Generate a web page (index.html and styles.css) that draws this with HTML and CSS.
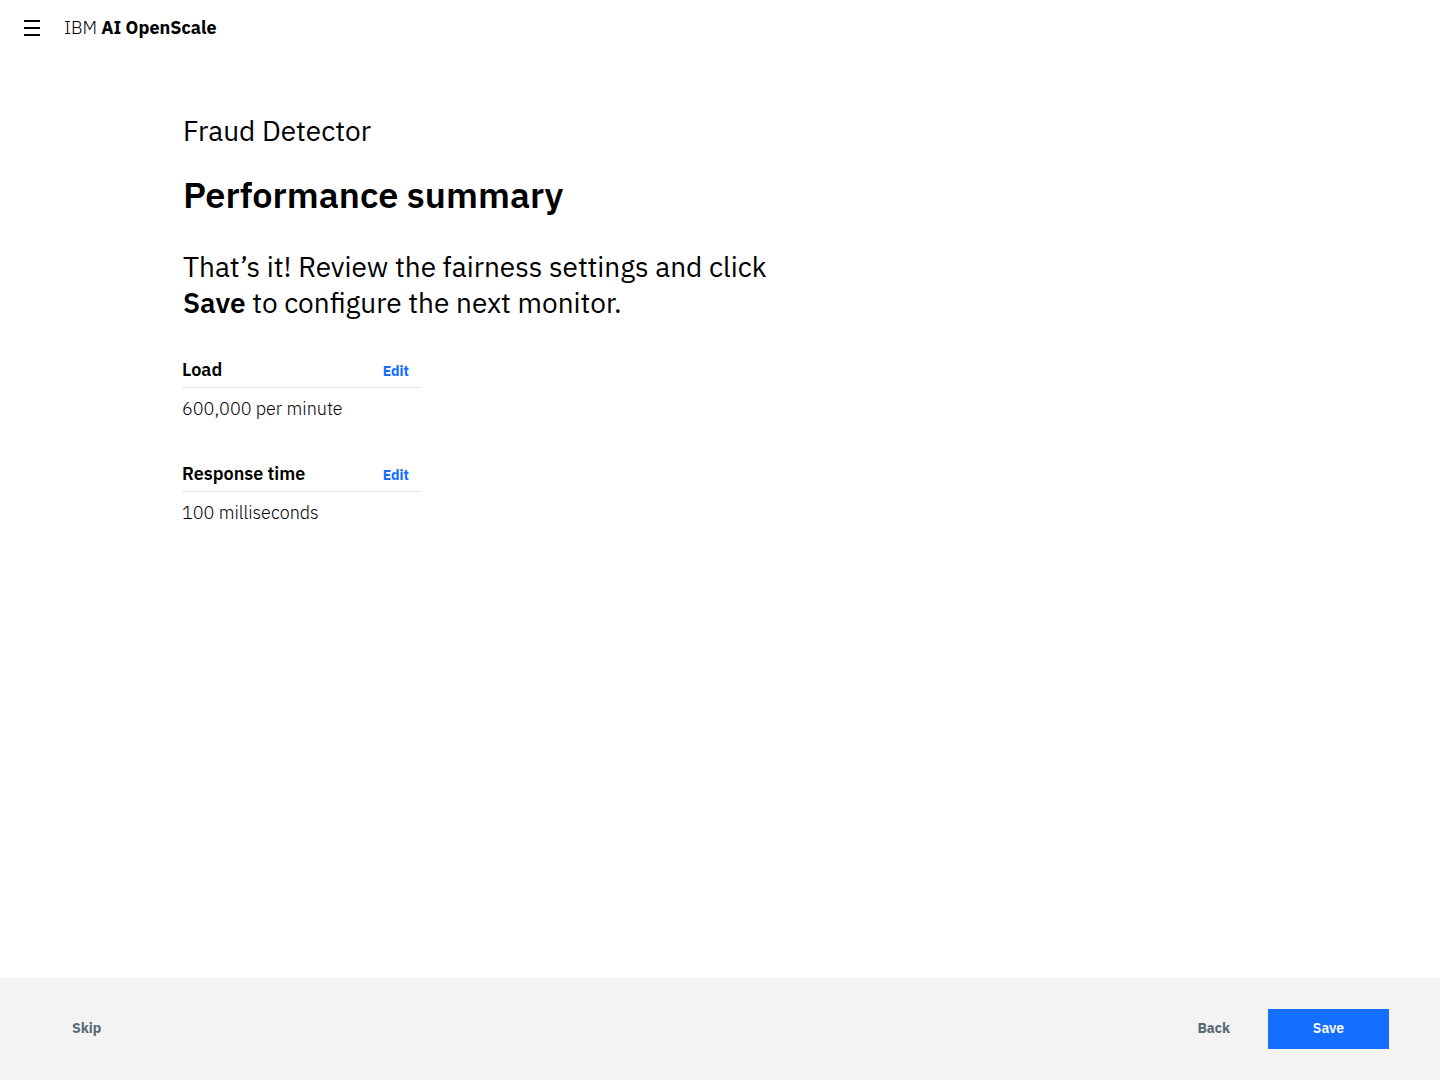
FILE: index.html
```html
<!DOCTYPE html>
<html lang="en">
<head>
<meta charset="utf-8">
<meta name="viewport" content="width=device-width, initial-scale=1">
<title>IBM AI OpenScale</title>
<link rel="stylesheet" href="styles.css">
</head>
<body>
<header class="header">
  <button class="menu-button" type="button" aria-label="Open menu">
    <svg width="16" height="16" viewBox="0 0 16 16" aria-hidden="true"><path d="M0 0h16v2H0zM0 7h16v2H0zM0 14h16v2H0z"/></svg>
  </button>
  <a class="brand" href="#">IBM <strong>AI OpenScale</strong></a>
</header>
<main class="content">
  <div class="summary">
    <p class="model-name">Fraud Detector</p>
    <h1 class="title">Performance summary</h1>
    <p class="intro">That’s it! Review the fairness settings and click <strong>Save</strong> to configure the next monitor.</p>
  </div>
  <section class="setting">
    <div class="setting-head"><h2 class="setting-name">Load</h2><button class="edit" type="button">Edit</button></div>
    <p class="setting-value">600,000 per minute</p>
  </section>
  <section class="setting">
    <div class="setting-head"><h2 class="setting-name">Response time</h2><button class="edit" type="button">Edit</button></div>
    <p class="setting-value">100 milliseconds</p>
  </section>
</main>
<footer class="footer">
  <button class="text-button" type="button">Skip</button>
  <div class="actions">
    <button class="text-button" type="button">Back</button>
    <button class="save-button" type="button">Save</button>
  </div>
</footer>
</body>
</html>
```
FILE: styles.css
```css
* { box-sizing: border-box; }
body {
  margin: 0;
  min-height: 100vh;
  display: flex;
  flex-direction: column;
  background: #fff;
  color: #000;
  font-family: "IBM Plex Sans", "Noto Sans", "Open Sans", sans-serif;
}
h1, h2, p { margin: 0; }
strong { font-weight: 600; }
button { padding: 0; border: 0; background: none; font: inherit; cursor: pointer; }
.header { display: flex; align-items: center; gap: 24px; height: 56px; padding: 0 24px; }
.menu-button { display: flex; }
.brand { color: inherit; text-decoration: none; font-size: 18px; line-height: 24px; font-weight: 300; }
.brand strong { font-weight: 700; }
.content { flex: 1; padding: 57px 182px 48px; }
.summary { max-width: 601px; padding-left: 1px; margin-bottom: 37px; }
.model-name { font-size: 28px; line-height: 36px; }
.title { margin-top: 24px; font-size: 36px; line-height: 44px; font-weight: 600; }
.intro { margin-top: 32px; font-size: 28px; line-height: 36px; }
.setting { width: 238px; margin-bottom: 41px; }
.setting-head { display: flex; align-items: baseline; justify-content: space-between; height: 30px; padding-right: 11px; border-bottom: 1px solid #e3e3e3; }
.setting-name { font-size: 18px; line-height: 24px; font-weight: 600; }
.edit { color: #146eff; font-size: 14px; line-height: 24px; font-weight: 700; }
.setting-value { padding-top: 9px; font-size: 18px; line-height: 24px; font-weight: 300; }
.footer { display: flex; align-items: center; justify-content: space-between; height: 102px; padding: 0 51px 0 72px; background: #f3f3f3; }
.actions { display: flex; align-items: center; gap: 38px; }
.text-button, .save-button { height: 40px; padding-bottom: 2px; font-size: 14px; font-weight: 700; }
.text-button { color: #5a6872; }
.save-button { width: 121px; background: #146eff; color: #fff; font-weight: 600; }
```
